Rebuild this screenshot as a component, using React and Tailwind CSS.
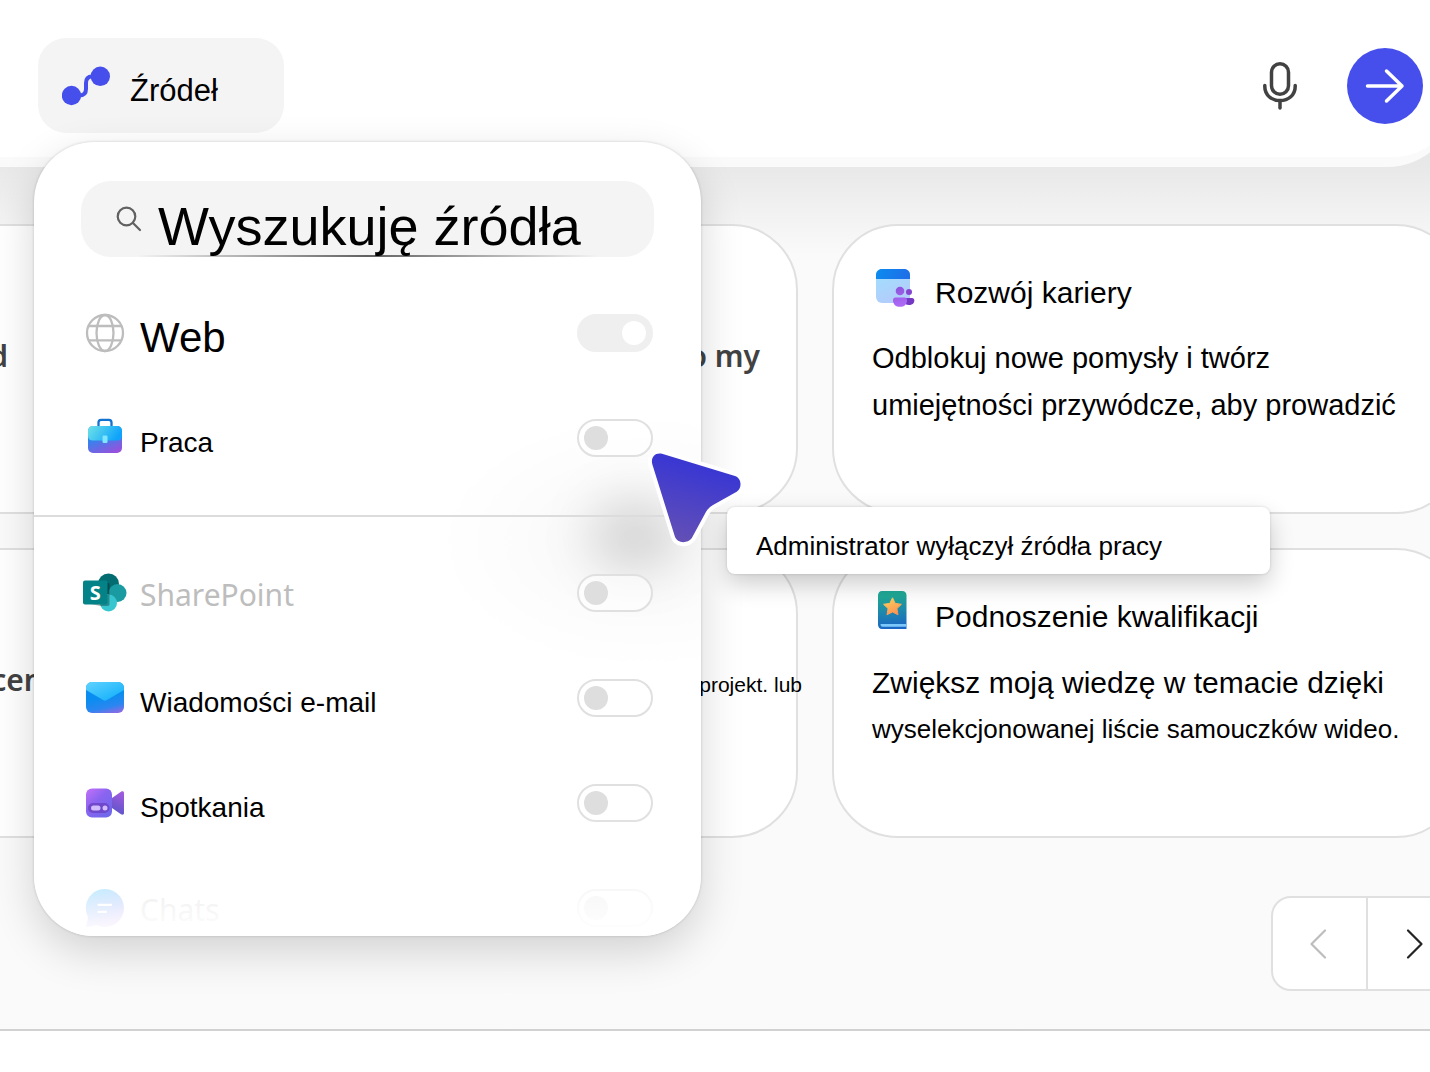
import React from 'react';

const SourcesIcon = () => (
  <svg width="48" height="40" viewBox="0 0 48 40" fill="none">
    <path d="M16 29.500H17C22 29.500 24 27 24 23V17C24 13 26 10.500 30 10.500H34" stroke="#464feb" strokeWidth="4" />
    <circle cx="9.500" cy="29.500" r="9.700" fill="#464feb" />
    <circle cx="38.300" cy="10.300" r="9.700" fill="#464feb" />
  </svg>
);

const MicIcon = () => (
  <svg width="36" height="48" viewBox="0 0 36 48" fill="none" stroke="#424242" strokeWidth="3.500" strokeLinecap="round">
    <rect x="9.500" y="1.800" width="17" height="30.500" rx="8.500" />
    <path d="M2.800 23.500V24.500C2.800 33 9.500 38.500 18 38.500S33.200 33 33.200 24.500V23.500" />
    <path d="M18 39V46" />
  </svg>
);

const ArrowIcon = () => (
  <svg width="40" height="36" viewBox="0 0 40 36" fill="none" stroke="#fff" strokeWidth="3.500" strokeLinecap="round" strokeLinejoin="round">
    <path d="M2.500 18H37M21.500 3L37 18L21.500 33" />
  </svg>
);

const SearchIcon = () => (
  <svg className="shrink-0" width="26" height="26" viewBox="0 0 26 26" fill="none" stroke="#616161" strokeWidth="2.200" strokeLinecap="round">
    <circle cx="10.500" cy="10.500" r="8.800" />
    <path d="M17 17L24 24" />
  </svg>
);

const GlobeIcon = () => (
  <svg width="40" height="40" viewBox="0 0 40 40" fill="none" stroke="#bdbdbd" strokeWidth="2.300">
    <circle cx="20" cy="20" r="18" />
    <ellipse cx="20" cy="20" rx="8.500" ry="18" />
    <path d="M3.500 13H36.500M3.500 27.300H36.500" />
  </svg>
);

const BriefcaseIcon = () => (
  <svg width="36" height="40" viewBox="0 0 36 40" fill="none">
    <defs>
      <linearGradient id="caseTop" x1="3" y1="7" x2="27" y2="24" gradientUnits="userSpaceOnUse">
        <stop stopColor="#6ce0e8" />
        <stop offset="1" stopColor="#0fa4fb" />
      </linearGradient>
      <linearGradient id="caseBottom" x1="8" y1="20" x2="16" y2="40" gradientUnits="userSpaceOnUse">
        <stop stopColor="#2f86ee" />
        <stop offset="1" stopColor="#9b4fdc" />
      </linearGradient>
    </defs>
    <path d="M11.500 9V4.500C11.500 2.800 12.300 1.800 14 1.800H22C23.700 1.800 24.500 2.800 24.500 4.500V9" stroke="#1272cf" strokeWidth="2.300" />
    <rect x="1" y="8" width="34" height="27" rx="5" fill="url(#caseBottom)" />
    <path d="M1 13C1 10 3 8 6 8H30C33 8 35 10 35 13V18C35 21 33 22.500 30 22.500H6C3 22.500 1 21 1 18Z" fill="url(#caseTop)" />
    <rect x="15.500" y="17.500" width="5" height="7.500" rx="1.200" fill="#7fe6ff" />
  </svg>
);

const SharePointIcon = () => (
  <svg width="44" height="40" viewBox="0 0 44 40">
    <circle cx="25.500" cy="11" r="10.500" fill="#036c70" />
    <circle cx="34.500" cy="20" r="9" fill="#1a9ba1" />
    <circle cx="25.500" cy="30" r="8.500" fill="#37c6d0" />
    <path d="M8 10H25C26 10 26.500 10.500 26.500 12V31C26.500 32 26 33 24.500 33H17L8 31Z" fill="#000" fillOpacity=".3" />
    <rect x="0" y="7.500" width="24.500" height="24" rx="2" fill="#038387" />
    <text x="12.200" y="26.500" textAnchor="middle" fill="#fff" fontSize="20" fontWeight="700" fontFamily="'Open Sans', sans-serif">S</text>
  </svg>
);

const MailIcon = () => (
  <svg width="40" height="34" viewBox="0 0 40 34">
    <defs>
      <linearGradient id="mailBody" x1="12" y1="8" x2="19" y2="38" gradientUnits="userSpaceOnUse">
        <stop offset=".3" stopColor="#0a8df0" />
        <stop offset=".65" stopColor="#2b86f0" />
        <stop offset="1" stopColor="#b45fe0" />
      </linearGradient>
      <linearGradient id="mailFlap" x1="8" y1="0" x2="18" y2="22" gradientUnits="userSpaceOnUse">
        <stop stopColor="#5bd0ff" />
        <stop offset="1" stopColor="#1cb4fb" />
      </linearGradient>
    </defs>
    <rect x="1" y="1" width="38" height="31" rx="6" fill="url(#mailBody)" />
    <path d="M1 9V7C1 3.500 3.500 1 7 1H33C36.500 1 39 3.500 39 7V9L21.500 19.200C20.500 19.800 19.500 19.800 18.500 19.200Z" fill="url(#mailFlap)" />
  </svg>
);

const MeetingIcon = () => (
  <svg width="40" height="32" viewBox="0 0 40 32">
    <defs>
      <linearGradient id="camBody" x1="1" y1="3" x2="24" y2="28" gradientUnits="userSpaceOnUse">
        <stop stopColor="#c070f8" />
        <stop offset=".45" stopColor="#8a64f0" />
        <stop offset="1" stopColor="#6f67ea" />
      </linearGradient>
      <linearGradient id="camLens" x1="38" y1="5" x2="28" y2="26" gradientUnits="userSpaceOnUse">
        <stop stopColor="#a55ae0" />
        <stop offset="1" stopColor="#5b55c8" />
      </linearGradient>
    </defs>
    <path d="M27 11L36 4.800C37.500 3.800 39 4.500 39 6V26C39 27.600 37.500 28.200 36 27.200L27 21Z" fill="url(#camLens)" />
    <rect x="1" y="1.500" width="26" height="29" rx="6" fill="url(#camBody)" />
    <rect x="3" y="16" width="21.500" height="10" rx="5" fill="#6a3fc0" fillOpacity=".75" />
    <rect x="6" y="18.500" width="9.500" height="5" rx="2.500" fill="#d0bcff" />
    <circle cx="20" cy="21" r="2.500" fill="#d0bcff" />
  </svg>
);

const ChatIcon = () => (
  <svg width="40" height="40" viewBox="0 0 40 40">
    <defs>
      <linearGradient id="chatBody" x1="12" y1="2" x2="26" y2="38" gradientUnits="userSpaceOnUse">
        <stop stopColor="#0fafff" />
        <stop offset=".6" stopColor="#4f7cf5" />
        <stop offset="1" stopColor="#b060f0" />
      </linearGradient>
    </defs>
    <path d="M20 1A19 19 0 1 1 11.500 37C8.500 38 5 38.800 2 39C1 39 1 38.200 1.300 37.500C2.500 34.500 3 31.500 2.800 28.500A19 19 0 0 1 20 1Z" fill="url(#chatBody)" />
    <path d="M13.500 16.800H26M13.500 23.800H21" stroke="#fff" strokeWidth="2.200" strokeLinecap="round" />
  </svg>
);

const CareerIcon = () => (
  <svg width="40" height="40" viewBox="0 0 40 40">
    <defs>
      <linearGradient id="careerPage" x1="10" y1="10" x2="22" y2="36" gradientUnits="userSpaceOnUse">
        <stop stopColor="#a5dafd" />
        <stop offset="1" stopColor="#b5cafb" />
      </linearGradient>
      <linearGradient id="careerBar" x1="1" y1="1" x2="30" y2="12" gradientUnits="userSpaceOnUse">
        <stop stopColor="#0a8cf0" />
        <stop offset="1" stopColor="#1e70e8" />
      </linearGradient>
      <linearGradient id="careerPeople" x1="20" y1="18" x2="26" y2="39" gradientUnits="userSpaceOnUse">
        <stop stopColor="#8950d8" />
        <stop offset="1" stopColor="#b06cf8" />
      </linearGradient>
    </defs>
    <rect x="1" y="1" width="34" height="34" rx="6" fill="url(#careerPage)" />
    <path d="M1 11V7C1 3.500 3.500 1 7 1H29C32.500 1 35 3.500 35 7V11Z" fill="url(#careerBar)" />
    <circle cx="34" cy="24" r="3" fill="#8444d0" />
    <path d="M29 30H37C38.500 30 39.300 31 39.300 32.500C39.300 35.500 37 37 34 37S29 35.500 29 33Z" fill="#7438c4" />
    <circle cx="25" cy="23" r="4.300" fill="url(#careerPeople)" />
    <path d="M20.500 29.500H29.500C31.200 29.500 32 30.700 32 32.200C32 36.500 29 38.800 25 38.800S18 36.500 18 32.200C18 30.700 18.800 29.500 20.500 29.500Z" fill="url(#careerPeople)" />
  </svg>
);

const BookIcon = () => (
  <svg width="40" height="44" viewBox="-2 0 40 44">
    <defs>
      <linearGradient id="bookCover" x1="12" y1="6" x2="15" y2="38" gradientUnits="userSpaceOnUse">
        <stop stopColor="#20a895" />
        <stop offset="1" stopColor="#1b66c4" />
      </linearGradient>
      <linearGradient id="bookStar" x1="10" y1="8" x2="18" y2="26" gradientUnits="userSpaceOnUse">
        <stop stopColor="#ffd45e" />
        <stop offset="1" stopColor="#fd8b52" />
      </linearGradient>
    </defs>
    <path d="M1 5.500C1 3 2.500 1 5 1H25C28 1 29.500 3 29.500 5.500V39H5C2.500 39 1 37 1 34.500Z" fill="url(#bookCover)" />
    <path d="M3.500 34H29.500V36.800H5.500C4.200 36.800 3.500 35.500 3.500 34Z" fill="#7cc8fa" />
    <path d="M15.500 7.800L18.200 13.400L24.400 14.300L19.900 18.600L21 24.800L15.500 21.900L10 24.800L11.100 18.600L6.600 14.300L12.800 13.400Z" fill="url(#bookStar)" stroke="url(#bookStar)" strokeWidth="1" strokeLinejoin="round" />
  </svg>
);

const PointerIcon = () => (
  <svg width="110" height="110" viewBox="0 0 110 110">
    <defs>
      <linearGradient id="pointerFill" x1="60" y1="28" x2="40" y2="102" gradientUnits="userSpaceOnUse">
        <stop stopColor="#3b38d2" />
        <stop offset="1" stopColor="#6450b4" />
      </linearGradient>
    </defs>
    <path
      d="M22 12.700L95 35C101.500 37 102.500 47 96.700 50.700L73 64Q68 66.700 65.500 71.700L51.700 97.300C47 103 37 102.500 34.700 95L12.300 23.300C10.500 16.500 15 11 22 12.700Z"
      fill="url(#pointerFill)"
      stroke="#fff"
      strokeWidth="8"
      strokeLinejoin="round"
      paintOrder="stroke"
    />
  </svg>
);

const ChevronIcon = ({ direction, color }) => (
  <svg width="20" height="32" viewBox="0 0 20 32" fill="none" stroke={color} strokeWidth="2.200" strokeLinecap="round" strokeLinejoin="round">
    <path d={direction === 'left' ? 'M15 2.500L1.500 16L15 29.500' : 'M4 2.500L17.500 16L4 29.500'} />
  </svg>
);

const workSources = [
  { id: 'web', label: 'Web', icon: GlobeIcon, labelClass: 'pt-[10px] text-[42px]', enabled: true },
  { id: 'work', label: 'Praca', icon: BriefcaseIcon, labelClass: 'pt-[10px] text-[28px]' },
];

const appSources = [
  { id: 'sharepoint', label: 'SharePoint', icon: SharePointIcon, labelClass: "pt-1 font-['Noto_Sans',sans-serif] text-[30px] text-[#bdbdbd]" },
  { id: 'mail', label: 'Wiadomości e-mail', icon: MailIcon, labelClass: 'pt-[10px] text-[28px]' },
  { id: 'meetings', label: 'Spotkania', icon: MeetingIcon, labelClass: 'pt-[10px] text-[28px]' },
  { id: 'chats', label: 'Chats', icon: ChatIcon, labelClass: "pt-1 font-['Noto_Sans',sans-serif] text-[30px] text-[#bdbdbd]" },
];

const Toggle = ({ id, enabled }) => (
  <input
    id={id}
    type="checkbox"
    defaultChecked={enabled}
    className="h-[38px] w-[76px] shrink-0 appearance-none rounded-full border-2 border-[#e0e0e0] bg-white/60 p-[5px] before:block before:size-6 before:rounded-full before:bg-[#dedede] checked:border-[#efefef] checked:bg-[#efefef] checked:before:ml-[38px] checked:before:bg-white"
  />
);

const SourceRow = ({ source }) => {
  const Icon = source.icon;
  return (
    <li className="flex h-[105px] items-center gap-[13px]">
      <span className="flex w-11 shrink-0 justify-center">
        <Icon />
      </span>
      <label htmlFor={source.id} className={`grow leading-none ${source.labelClass}`}>
        {source.label}
      </label>
      <Toggle id={source.id} enabled={source.enabled} />
    </li>
  );
};

const SourcesMenu = () => (
  <div className="absolute -left-1 top-full mt-[9px] w-[667px]">
    <div className="relative h-[794px] overflow-hidden rounded-[60px] bg-white shadow-[0_0_3px_rgba(0,0,0,0.18),0_16px_44px_rgba(0,0,0,0.16)]">
      {/* Soft shadow cast by the pointer */}
      <div className="absolute left-[400px] top-[270px] h-[260px] w-[420px] bg-[radial-gradient(closest-side,rgba(0,0,0,0.04),rgba(0,0,0,0.01)_60%,transparent)]" />
      <div className="absolute left-[555px] top-[355px] h-[76px] w-[90px] rounded-full bg-black/12 blur-xl" />

      <div className="relative">
        <div className="px-[47px] pt-[39px]">
          <div className="relative flex items-center gap-4 overflow-hidden rounded-[30px] bg-[#f4f4f4] pl-[35px]">
            <div className="absolute inset-x-14 bottom-0 h-[2px] bg-linear-to-r from-transparent via-[#616161] to-transparent" />
            <SearchIcon />
            <input
              type="text"
              aria-label="Wyszukuję źródła"
              defaultValue="Wyszukuję źródła"
              className="relative h-[76px] min-w-0 grow bg-transparent pt-[14px] text-[54px] leading-none outline-none"
            />
          </div>
        </div>
        <ul className="mt-[23px] pl-[49px] pr-12">
          {workSources.map((source) => (
            <SourceRow key={source.id} source={source} />
          ))}
        </ul>
        <hr className="mb-[23px] mt-[25px] border-t-2 border-[#dcdcdc]" />
        <ul className="pl-[49px] pr-12">
          {appSources.map((source) => (
            <SourceRow key={source.id} source={source} />
          ))}
        </ul>
      </div>
      <div className="pointer-events-none absolute inset-x-0 bottom-0 h-[120px] bg-linear-to-b from-transparent via-white/70 to-white" />
    </div>

    {/* Pointer and its tooltip */}
    <div className="pointer-events-none absolute left-[606px] top-[299px]">
      <PointerIcon />
    </div>
    <div role="tooltip" className="absolute left-[693px] top-[365px] w-[543px] rounded-lg bg-white pb-[15px] pl-[29px] pt-[26px] text-[26px] leading-[26px] whitespace-nowrap shadow-[0_0_3px_rgba(0,0,0,0.15),0_10px_24px_rgba(0,0,0,0.2)]">
      Administrator wyłączył źródła pracy
    </div>
  </div>
);

const Card = ({ children }) => (
  <article className="min-h-[290px] rounded-[66px] border-2 border-[#e0e0e0] bg-white pt-[42px]">
    {children}
  </article>
);

const CardTitle = ({ icon, children }) => (
  <div className="flex h-10 items-center gap-[17px]">
    <span className="flex w-[46px] shrink-0 justify-center">{icon}</span>
    <h2 className="pt-[10px] text-[30px] leading-none">{children}</h2>
  </div>
);

const App = () => {
  return (
    <div className="flex min-h-screen flex-col overflow-hidden bg-[#fafafa] font-['Liberation_Sans',Arial,sans-serif] text-black">
      <header className="relative z-10 -mr-[27px] rounded-br-[70px] bg-[#fafafa] pb-[10px]">
        <div className="flex items-start justify-between rounded-br-[64px] bg-white pb-6 pl-[38px] pr-[34px] pt-[38px]">
          <div className="relative">
            <button type="button" className="flex h-[95px] w-[246px] items-center gap-5 rounded-[28px] bg-[#f4f4f4] pl-6">
              <SourcesIcon />
              <span className="pt-[10px] text-[31px] leading-none">Źródeł</span>
            </button>
            <SourcesMenu />
          </div>
          <div className="flex h-[95px] items-center gap-[49px]">
            <button type="button" aria-label="Mikrofon">
              <MicIcon />
            </button>
            <button type="button" aria-label="Wyślij" className="flex size-[76px] items-center justify-center rounded-full bg-[#464feb]">
              <ArrowIcon />
            </button>
          </div>
        </div>
      </header>

      <main className="-mt-8 bg-linear-to-b from-[#e8e8e8] from-[30px] to-[#fafafa] to-[120px] pb-[38px] pt-[89px]">
        <div className="-ml-[496px] -mr-8 grid grid-cols-3 gap-[34px]">
          <Card>
            <p className="pr-[124px] pt-16 text-right font-['Noto_Sans',sans-serif] text-[30px] font-semibold leading-[47px] text-[#424242]">d</p>
          </Card>
          <Card>
            <p className="pr-9 pt-16 text-right font-['Noto_Sans',sans-serif] text-[30px] font-semibold leading-[47px] text-[#424242]">to my</p>
          </Card>
          <Card>
            <div className="pl-[38px]">
              <CardTitle icon={<CareerIcon />}>Rozwój kariery</CardTitle>
              <p className="mt-[27px] text-[29px] leading-[47px] whitespace-nowrap">
                Odblokuj nowe pomysły i twórz
                <br />
                umiejętności przywódcze, aby prowadzić
              </p>
            </div>
          </Card>
          <Card>
            <p className="pr-[89px] pt-16 text-right font-['Noto_Sans',sans-serif] text-[30px] font-semibold leading-[47px] text-[#424242]">cen</p>
          </Card>
          <Card>
            <p className="-mr-[6px] pt-[69px] text-right text-[21px] leading-[47px]">projekt. lub</p>
          </Card>
          <Card>
            <div className="pl-[38px]">
              <CardTitle icon={<BookIcon />}>Podnoszenie kwalifikacji</CardTitle>
              <p className="mt-[27px] text-[30px] leading-[47px] whitespace-nowrap">Zwiększ moją wiedzę w temacie dzięki</p>
              <p className="text-[26px] leading-[46px] whitespace-nowrap">wyselekcjonowanej liście samouczków wideo.</p>
            </div>
          </Card>
        </div>

        <nav className="-mr-8 mt-[58px] flex justify-end">
          <div className="flex h-[95px] divide-x-2 divide-[#e0e0e0] rounded-[20px] border-2 border-[#e0e0e0] bg-white">
            <button type="button" aria-label="Poprzednie" className="flex w-[95px] items-center justify-center">
              <ChevronIcon direction="left" color="#bdbdbd" />
            </button>
            <button type="button" aria-label="Następne" className="flex w-[92px] items-center justify-center">
              <ChevronIcon direction="right" color="#242424" />
            </button>
          </div>
        </nav>
      </main>

      <footer className="min-h-[42px] grow border-t-2 border-[#d1d1d1] bg-white" />
    </div>
  );
};

export default App;
